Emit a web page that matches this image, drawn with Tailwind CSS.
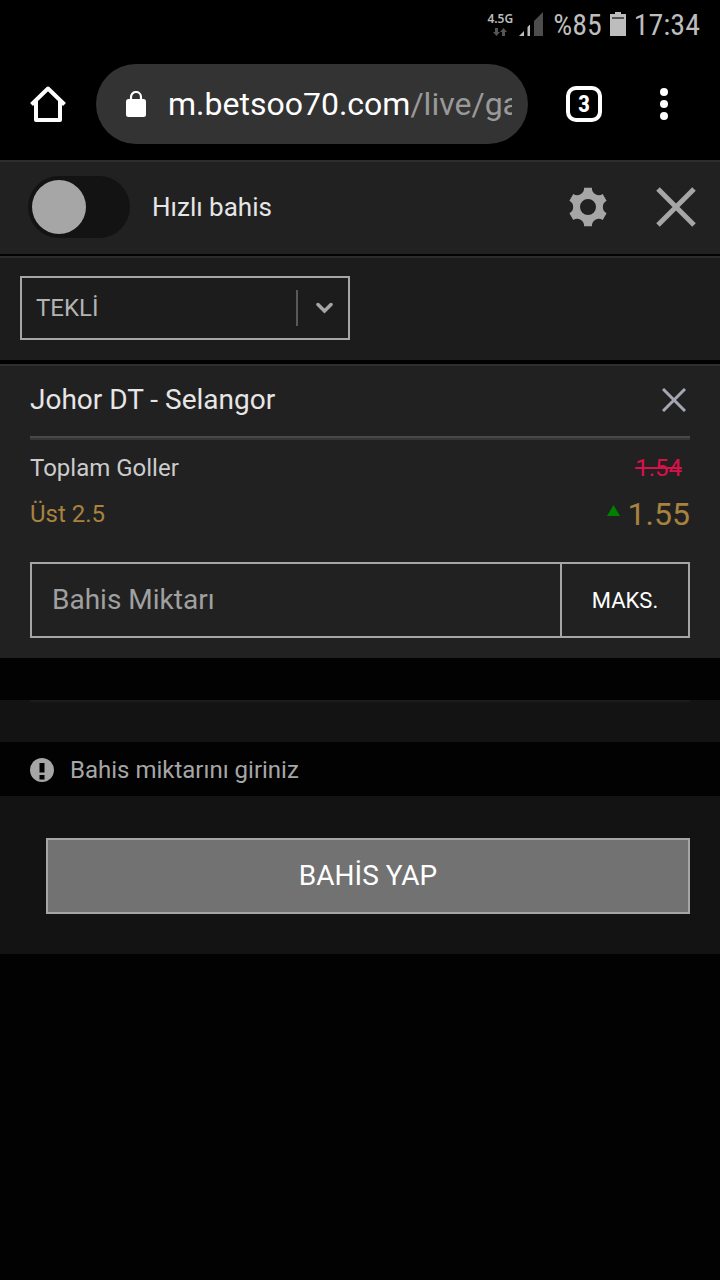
<!DOCTYPE html>
<html lang="tr">
<head>
  <meta charset="UTF-8">
  <meta name="viewport" content="width=device-width, initial-scale=1.0" />
  <script src="https://cdn.jsdelivr.net/npm/@tailwindcss/browser@4"></script>
  <title>Bahis kuponu</title>
</head>
<body class="min-h-screen bg-[#020202] font-[Roboto,sans-serif] text-[#e6e6e6]">

<!-- status bar -->
<div class="flex h-12 items-center justify-end bg-black pr-5 font-['Roboto_Condensed',Roboto,sans-serif] text-[30px] text-[#bdbdbd]">
  <div class="mr-1.5 flex flex-col items-center">
    <span class="font-['Noto_Sans',sans-serif] text-[12px] leading-4 font-semibold">4.5G</span>
    <svg class="h-2.5 w-4" viewBox="0 0 16 10" fill="#555">
      <path d="M3 1h3v4h2L4.500 9 1 5h2zM10 9h3V5h2L11.500 1 8 5h2z"/>
    </svg>
  </div>
  <svg class="mr-2.5 size-6" viewBox="0 0 24 24">
    <path d="M0 24l5-5v5zM8.500 24V15l2.500-2.500V24z" fill="#bdbdbd"/>
    <path d="M15 24V9l9-9v24z" fill="#4d4d4d"/>
  </svg>
  <span class="mr-2">%85</span>
  <svg class="mr-2 h-6 w-4" viewBox="0 0 16 24">
    <path d="M0 2h5V0h6v2h5v22H0z" fill="#bdbdbd"/>
    <path d="M2 5h12v2H2z" fill="#555"/>
  </svg>
  <span>17:34</span>
</div>

<!-- browser toolbar -->
<div class="flex items-center bg-black py-4 pr-[52px] pl-[30px]">
  <button aria-label="Ana sayfa">
    <svg class="size-9" viewBox="0 0 36 36" fill="none" stroke="#fff" stroke-width="4" stroke-linejoin="round">
      <path d="M1.500 18.500L18 2.500l16.500 16"/>
      <path d="M6 15v19h24V15"/>
    </svg>
  </button>
  <div class="ml-[30px] flex h-20 min-w-0 flex-1 items-center rounded-full bg-[#333] pr-4 pl-[30px]">
    <svg class="mr-[22px] h-[26px] w-5 shrink-0" viewBox="0 0 20 26">
      <rect y="8" width="20" height="18" rx="2.500" fill="#fff"/>
      <path d="M5 9V6a5 5 0 0 1 10 0v3" fill="none" stroke="#fff" stroke-width="2.200"/>
    </svg>
    <div class="min-w-0 flex-1 overflow-hidden text-[32px] whitespace-nowrap text-white">m.betsoo70.com<span class="text-[#999]">/live/ga</span></div>
  </div>
  <button class="ml-[38px] flex size-9 items-center justify-center rounded-[10px] border-4 border-white font-['Roboto_Condensed',Roboto,sans-serif] text-2xl font-bold text-white">3</button>
  <button aria-label="Menü" class="ml-[58px] flex flex-col gap-1">
    <span class="size-2 rounded-full bg-white"></span>
    <span class="size-2 rounded-full bg-white"></span>
    <span class="size-2 rounded-full bg-white"></span>
  </button>
</div>

<!-- quick bet -->
<div class="mb-0.5 flex items-center border-t-2 border-[#2e2e2e] bg-[#212121] pt-3.5 pr-6 pb-4 pl-7">
  <input type="checkbox" id="quickBet" class="h-[62px] w-[102px] appearance-none rounded-full bg-[#131313] p-1 before:block before:size-[54px] before:rounded-full before:bg-[#a6a6a6] checked:before:ml-10">
  <label for="quickBet" class="ml-[22px] text-[26px]">Hızlı bahis</label>
  <button aria-label="Ayarlar" class="ml-auto">
    <svg class="size-10" viewBox="0 0 40 40" fill="#a6a6a6" fill-rule="evenodd">
      <path d="M16.100 .8H23.900A7 7 0 0 0 34.700 7L38.600 13.800A7 7 0 0 0 38.600 26.200L34.700 33A7 7 0 0 0 23.900 39.200H16.100A7 7 0 0 0 5.300 33L1.400 26.200A7 7 0 0 0 1.400 13.800L5.300 7A7 7 0 0 0 16.100 .8zM20 12a8 8 0 1 0 0 16a8 8 0 1 0 0-16z"/>
    </svg>
  </button>
  <button aria-label="Kapat" class="ml-12">
    <svg class="size-10" viewBox="0 0 40 40" stroke="#a6a6a6" stroke-width="5">
      <path d="M2 2l36 36M38 2L2 38"/>
    </svg>
  </button>
</div>

<!-- bet type -->
<div class="mb-1 border-t-2 border-[#2b2b2b] bg-[#1c1c1c] px-5 pt-4.5 pb-5">
  <div class="relative w-[330px]">
    <select aria-label="Bahis tipi" class="block h-16 w-full appearance-none border-2 border-[#a6a6a6] bg-transparent pl-3.5 text-2xl text-[#b3b3b3]">
      <option>TEKLİ</option>
    </select>
    <div class="pointer-events-none absolute inset-y-3.5 right-4 flex items-center border-l-2 border-[#595959] pl-4.5">
      <svg class="h-3 w-[18px]" viewBox="0 0 18 12" fill="none" stroke="#a6a6a6" stroke-width="3.500" stroke-linecap="round">
        <path d="M2 2.500L8.500 9 15 2.500"/>
      </svg>
    </div>
  </div>
</div>

<!-- selection -->
<div class="border-t-2 border-[#2e2e2e] bg-[#212121] px-[30px] pb-5">
  <div class="flex h-[70px] items-center justify-between pr-1 pb-0.5">
    <h2 class="text-[28px]">Johor DT - Selangor</h2>
    <button aria-label="Sil">
      <svg class="size-6" viewBox="0 0 24 24" stroke="#a5a8b2" stroke-width="3">
        <path d="M1 1l22 22M23 1L1 23"/>
      </svg>
    </button>
  </div>
  <div class="h-1 border-t-2 border-[#4a4747] bg-[#383536]"></div>
  <div class="flex h-12 items-end justify-between pr-2 pb-1 text-2xl text-[#ccc]">
    <span>Toplam Goller</span>
    <s class="text-[#d8104c]">1.54</s>
  </div>
  <div class="flex h-[52px] items-center justify-between text-[#a8823f]">
    <span class="text-2xl">Üst 2.5</span>
    <span class="flex items-center gap-2 text-[32px]">
      <svg class="mb-2 h-[11px] w-[13px]" viewBox="0 0 13 11" fill="#008000"><path d="M6.500 0L13 11H0z"/></svg>
      1.55
    </span>
  </div>
  <div class="mt-[22px] flex h-[76px] border-2 border-[#a6a6a6]">
    <input type="text" aria-label="Bahis Miktarı" placeholder="Bahis Miktarı" class="min-w-0 flex-1 bg-transparent px-5 text-[28px] outline-none placeholder:text-[#a0a0a0]">
    <button class="w-32 border-l-2 border-[#a6a6a6] text-[22px] text-white">MAKS.</button>
  </div>
</div>

<div class="mt-[42px] h-[42px] bg-[#131313] px-[30px]">
  <div class="h-0.5 bg-[#1c1c1c]"></div>
</div>

<div class="flex h-[54px] items-center gap-4 px-[30px] pt-0.5 text-2xl text-[#a6a6a6]">
  <svg class="size-6" viewBox="0 0 24 24">
    <circle cx="12" cy="12" r="12" fill="#a6a6a6"/>
    <path d="M9.500 5h5v9.500h-5zM9.500 17h5v4.500h-5z" fill="#020202"/>
  </svg>
  <span>Bahis miktarını giriniz</span>
</div>

<div class="bg-[#131313] pt-[42px] pr-[30px] pb-10 pl-[46px]">
  <button class="h-[76px] w-full border-2 border-[#a6a6a6] bg-[#727272] text-[28px] text-white">BAHİS YAP</button>
</div>

</body>
</html>
